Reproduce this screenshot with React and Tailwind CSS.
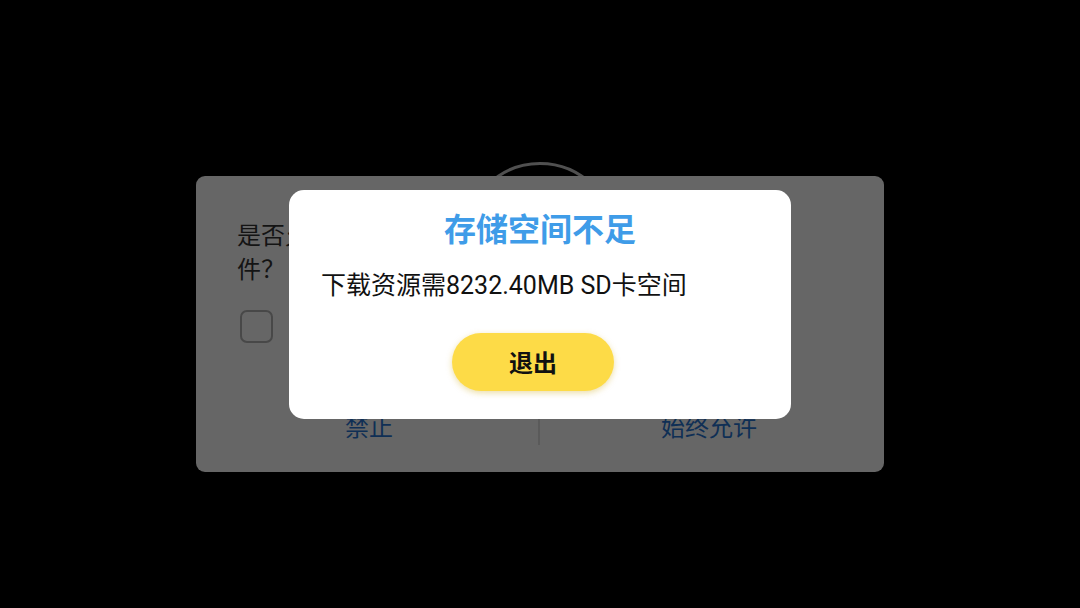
export default function App() {
  const font = { fontFamily: "Roboto, 'Noto Sans CJK SC', sans-serif" };
  const cjk = { fontFamily: "'Noto Sans CJK SC', sans-serif" };
  return (
    <div className="relative w-[1080px] h-[608px] bg-black overflow-hidden" style={font}>
      {/* loading ring behind */}
      <div className="absolute left-[464px] top-[162px] w-[152px] h-[152px] rounded-full border-[3px] border-[#505050]" />
      <div className="relative pt-[176px]">
        <div className="mx-auto w-[688px] h-[296px] rounded-[9px] bg-[#666666] flex flex-col pl-[41px]">
          <div className="pt-[44px] text-[24px] leading-[32px] text-[#141414] whitespace-nowrap">
            是否允许“应用宝”访问设备上的照片、媒体内容和文<br />件<span style={cjk}>？</span>
          </div>
          <div className="mt-[24px] w-[33px] h-[33px] ml-[3px] rounded-[7px] border-2 border-[#484848]" />
          <div className="mt-[55px] -ml-[41px] flex items-center h-[60px]">
            <div className="flex-1 flex justify-center pl-[4px] text-[24px] text-[#0f2f55]">禁止</div>
            <div className="w-[2px] h-[34px] bg-[#5a5a5a]" />
            <div className="flex-1 flex justify-center pr-[6px] text-[24px] text-[#0f2f55]">始终允许</div>
          </div>
        </div>
      </div>
      {/* front dialog */}
      <div className="absolute left-[289px] top-[190px] w-[502px] h-[229px] rounded-[15px] bg-white flex flex-col px-[32px]">
        <div className="pt-[19px] text-center text-[32px] leading-[42px] font-bold text-[#3f9ce8]">存储空间不足</div>
        <div className="mt-[19px] text-[25px] leading-[32px] text-[#111111] whitespace-nowrap">下载资源需8232.40MB SD卡空间</div>
        <div className="mt-[31px] flex">
          <div className="ml-[131px] w-[162px] h-[58px] pt-[3px] rounded-full bg-[#fddb47] shadow-[0_2px_6px_rgba(200,160,0,0.35)] flex items-center justify-center text-[24px] font-bold text-[#111111]">
            退出
          </div>
        </div>
      </div>
    </div>
  );
}
